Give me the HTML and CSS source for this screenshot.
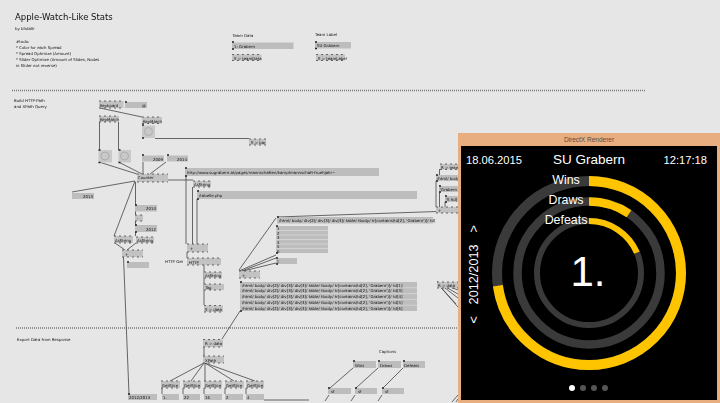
FILE: index.html
```html
<!DOCTYPE html>
<html>
<head>
	<meta charset="utf-8">
	<title>Apple-Watch-Like Stats</title>
	<link rel="stylesheet" href="styles.css">
</head>
<body>
	<!-- the patch is a free canvas, every node sits where it was dropped -->
	<svg class="patch" width="720" height="403" viewBox="0 0 720 403">
		<text class="heading" x="15" y="20">Apple-Watch-Like Stats</text>
		<text class="label" x="15" y="30">by bhdallr</text>
		<text class="label" x="16" y="42.5">#todo:</text>
		<text class="label" x="16" y="49">* Color for each Spread</text>
		<text class="label" x="16" y="54.5">* Spread Optimize (Amount)</text>
		<text class="label" x="16" y="60.5">* Slider Optimize (Amount of Slides, Nodes</text>
		<text class="label" x="16" y="66.5">in Slider not reverse)</text>
		<text class="label" x="232.5" y="37">Team Data</text>
		<text class="label" x="315" y="36">Team Label</text>
		<text class="label" x="14" y="102">Build HTTP-Path</text>
		<text class="label" x="14" y="108">and XPath Query</text>
		<text class="label" x="165" y="263">HTTP Get</text>
		<text class="label" x="17" y="341">Export Data from Response</text>
		<text class="label" x="379" y="352.5">Captions</text>

		<line class="rule" x1="12" y1="90.5" x2="645" y2="90.5"/>
		<line class="rule" x1="16" y1="328" x2="458" y2="328"/>

		<!-- links -->
		<path class="wire" d="M100 108L142 117M99.5 122V150M118.5 122V150M155 138.5H249M99 162L137 174M118.5 162L142 174M143 162V174M166 162L150 174M168 180H193M135 181L72 192M135 181L114 236M135.5 182V236M136 243L127 250M115 243L125 250M123.5 257L129 394M186 176V244M192.5 187V244M197 199V244M187 252V258M204 265V305M239 270L276 218M239 271L276 255M239 272L276 258M239 272L276 263M240 311L222 339M277 217L437 211.5M436 181V207M439.5 169V175M439.5 192V207M445 202V207M437 282L458 290M437 282L458 294M437 282L458 298M437 283L458 307M437 283L456 304M204 347V356M204 363L170 381M204 363L191 381M205 363V381M205 363L234 381M205 363L255 381M162 388V394M183 388V394M204 388V394M225 388V394M246 388V394M264 400H309M353 368L330 388M378 368L356 388M403 368L383 388M329 395L325 401M355 395L351 401M382 395L378 401M452 402L458 395M456 402L458 399"/>

		<!-- io boxes -->
		<rect class="box" x="232" y="42.5" width="61.5" height="6.5"/>
		<text class="value" x="234" y="47.5">1: Grabern</text>
		<rect class="box" x="315" y="42" width="36" height="6.5"/>
		<text class="value" x="317" y="47">SU Grabern</text>
		<rect class="box" x="125" y="102" width="22" height="6"/>
		<text class="value end" x="146" y="107">@</text>
		<rect class="pad" x="142" y="125.5" width="13" height="12.5"/>
		<rect class="pad" x="98.5" y="150" width="13.5" height="12.5"/>
		<rect class="pad" x="118.5" y="150" width="12.5" height="12.5"/>
		<circle class="bang" cx="148.5" cy="131.5" r="4"/>
		<circle class="bang" cx="105" cy="156" r="4"/>
		<circle class="bang" cx="124.5" cy="156" r="4"/>
		<rect class="box" x="142" y="155.5" width="22" height="6"/>
		<text class="value end" x="163" y="160.5">2009</text>
		<rect class="box" x="167" y="155.5" width="21" height="6"/>
		<text class="value end" x="187" y="160.5">2014</text>
		<rect class="box" x="72" y="193" width="22" height="6"/>
		<text class="value end" x="93" y="198">2013</text>
		<rect class="box" x="135" y="205" width="22" height="6.5"/>
		<text class="value end" x="156" y="210">2013</text>
		<rect class="box" x="135" y="225" width="22" height="7"/>
		<text class="value end" x="156" y="230.5">2012</text>
		<rect class="box" x="127" y="262" width="22" height="6"/>
		<rect class="box" x="185" y="168" width="194" height="8"/>
		<text class="value" x="187" y="173.5">http://www.sugrabern.at/pages/mannschaften/kampfmannschaft-fruehjahr~</text>
		<rect class="box" x="197" y="191" width="220" height="8"/>
		<text class="value" x="199" y="196.5">/tabelle.php</text>
		<rect class="box" x="277" y="217" width="156" height="6.5"/>
		<text class="value" x="279" y="222">/html/ body/ div[2]/ div[3]/ div[3]/ table/ tbody/ tr[contains(td[2], 'Grabern')]/ td[</text>
		<rect class="box" x="276" y="226" width="52" height="27"/>
		<path class="rows" d="M276 230.5H328M276 235H328M276 239.5H328M276 244H328M276 248.5H328"/>
		<text class="value" x="277" y="230">1</text>
		<text class="value" x="277" y="234.5">2</text>
		<text class="value" x="277" y="239">3</text>
		<text class="value" x="277" y="243.5">4</text>
		<text class="value" x="277" y="248">5</text>
		<text class="value" x="277" y="252.5">6</text>
		<rect class="box" x="276" y="258" width="21" height="6"/>
		<text class="value" x="277" y="263">]</text>
		<rect class="box" x="240" y="282" width="177" height="29"/>
		<path class="rows" d="M240 287.8H417M240 293.6H417M240 299.4H417M240 305.2H417"/>
		<text class="value" x="242" y="286.5">/html/ body/ div[2]/ div[3]/ div[3]/ table/ tbody/ tr[contains(td[2], 'Grabern')]/ td[1]</text>
		<text class="value" x="242" y="292.3">/html/ body/ div[2]/ div[3]/ div[3]/ table/ tbody/ tr[contains(td[2], 'Grabern')]/ td[3]</text>
		<text class="value" x="242" y="298.1">/html/ body/ div[2]/ div[3]/ div[3]/ table/ tbody/ tr[contains(td[2], 'Grabern')]/ td[4]</text>
		<text class="value" x="242" y="303.9">/html/ body/ div[2]/ div[3]/ div[3]/ table/ tbody/ tr[contains(td[2], 'Grabern')]/ td[5]</text>
		<text class="value" x="242" y="309.7">/html/ body/ div[2]/ div[3]/ div[3]/ table/ tbody/ tr[contains(td[2], 'Grabern')]/ td[6]</text>
		<rect class="box" x="436" y="175" width="22" height="6"/>
		<text class="value" x="437" y="180">/html/ body</text>
		<rect class="box" x="439" y="186" width="19" height="6"/>
		<text class="value" x="440" y="191">'Grabern</text>
		<rect class="box" x="445" y="196" width="13" height="6"/>
		<text class="value" x="446" y="201">'S hd[</text>
		<rect class="box" x="128" y="394" width="29" height="6"/>
		<text class="value" x="129" y="399">2012/2013</text>
		<rect class="box" x="162" y="394" width="17" height="6"/>
		<text class="value" x="163" y="399">1.</text>
		<rect class="box" x="183" y="394" width="17" height="6"/>
		<text class="value" x="184" y="399">22</text>
		<rect class="box" x="204" y="394" width="18" height="6"/>
		<text class="value" x="205" y="399">16</text>
		<rect class="box" x="225" y="394" width="18" height="6"/>
		<text class="value" x="226" y="399">2</text>
		<rect class="box" x="246" y="394" width="18" height="6"/>
		<text class="value" x="247" y="399">4</text>
		<rect class="box" x="353" y="361" width="23" height="7"/>
		<text class="value" x="355" y="366.5">Wins</text>
		<rect class="box" x="378" y="361" width="23" height="7"/>
		<text class="value" x="380" y="366.5">Draws</text>
		<rect class="box" x="403" y="361" width="22" height="7"/>
		<text class="value" x="404" y="366.5">Defeats</text>
		<rect class="box" x="328" y="388" width="23" height="6"/>
		<text class="value" x="331" y="393">sf</text>
		<rect class="box" x="355" y="388" width="22" height="6"/>
		<text class="value" x="358" y="393">sf</text>
		<rect class="box" x="382" y="388" width="22" height="6"/>
		<text class="value" x="385" y="393">sf</text>

		<!-- nodes -->
		<rect class="node" x="232" y="54.5" width="29.5" height="6"/>
		<text class="value" x="234" y="59.5">S &gt; teamData</text>
		<rect class="node" x="316" y="54.5" width="29" height="6"/>
		<text class="value" x="318" y="59.5">S &gt; teamLabel</text>
		<rect class="node" x="99" y="101" width="24.5" height="7"/>
		<text class="value" x="100" y="106.5">Keyboard</text>
		<rect class="node" x="99" y="116" width="20" height="6"/>
		<text class="value" x="100" y="121">KeyMatch</text>
		<rect class="node" x="142" y="117" width="20" height="6.5"/>
		<text class="value" x="143" y="122.5">KeyMatch</text>
		<rect class="node" x="249" y="139" width="17" height="6"/>
		<text class="value" x="251" y="144">S &gt; bar</text>
		<rect class="node" x="137" y="174" width="31" height="8"/>
		<text class="value" x="138" y="179">Counter</text>
		<rect class="node" x="135" y="215" width="8" height="6"/>
		<text class="value" x="137" y="220">-</text>
		<rect class="node" x="114" y="236" width="19" height="7"/>
		<text class="value" x="115" y="241.5">AsString</text>
		<rect class="node" x="136" y="237" width="18" height="6"/>
		<text class="value" x="137" y="242">AsString</text>
		<rect class="node" x="122" y="250" width="21" height="7"/>
		<text class="value" x="125" y="255.5">+</text>
		<rect class="node" x="193" y="181" width="18" height="6"/>
		<text class="value" x="194" y="186">AsString</text>
		<rect class="node" x="187" y="244" width="21" height="8"/>
		<text class="value" x="190" y="249.5">+</text>
		<rect class="node" x="187" y="258" width="34" height="7"/>
		<text class="value" x="189" y="263.5">HTTP</text>
		<rect class="node" x="204" y="272" width="18" height="6"/>
		<text class="value" x="205" y="277">AsString</text>
		<rect class="node" x="204" y="284" width="20" height="6"/>
		<text class="value" x="205" y="289">Tag</text>
		<rect class="node" x="204" y="305.5" width="19" height="6.5"/>
		<text class="value" x="205" y="310.5">S &gt; data</text>
		<rect class="node" x="239" y="271" width="21" height="7"/>
		<text class="value" x="242" y="276.5">+</text>
		<rect class="node" x="440" y="164" width="18" height="5.5"/>
		<text class="value" x="441" y="168.5">R &gt; teamData</text>
		<rect class="node" x="436" y="207" width="22" height="6"/>
		<text class="value" x="438" y="212">+</text>
		<rect class="node" x="437" y="282" width="21" height="6"/>
		<text class="value" x="438" y="287">R &gt; data</text>
		<rect class="node" x="203" y="339.5" width="20" height="7.5"/>
		<text class="value" x="205" y="345">R &gt; data</text>
		<rect class="node" x="203" y="356" width="21" height="7"/>
		<text class="value" x="205" y="361.5">XPath</text>
		<rect class="node" x="161" y="381" width="19" height="7"/>
		<text class="value" x="162" y="386.5">GetSlice</text>
		<rect class="node" x="183" y="381" width="18" height="7"/>
		<text class="value" x="184" y="386.5">GetSlice</text>
		<rect class="node" x="204" y="381" width="18" height="7"/>
		<text class="value" x="205" y="386.5">GetSlice</text>
		<rect class="node" x="225" y="381" width="19" height="7"/>
		<text class="value" x="226" y="386.5">GetSlice</text>
		<rect class="node" x="246" y="381" width="18" height="7"/>
		<text class="value" x="247" y="386.5">GetSlice</text>

		<path class="pins" d="M232 54.5h29.5M232 60.5h29.5M316 54.5h29M316 60.5h29M99 101h24.5M99 108h24.5M99 116h20M99 122h20M142 117h20M142 123.5h20M249 139h17M249 145h17M137 174h31M137 182h31M135 215h8M135 221h8M114 236h19M114 243h19M136 237h18M136 243h18M122 250h21M122 257h21M193 181h18M193 187h18M187 244h21M187 252h21M187 258h34M187 265h34M204 272h18M204 278h18M204 284h20M204 290h20M204 305.5h19M204 312h19M239 271h21M239 278h21M440 164h18M440 169.5h18M436 207h22M436 213h22M437 282h21M437 288h21M203 339.5h20M203 347h20M203 356h21M203 363h21M161 381h19M161 388h19M183 381h18M183 388h18M204 381h18M204 388h18M225 381h19M225 388h19M246 381h18M246 388h18"/>
		<path class="corners" d="M232 42h2M232 49h2M315 42h2M315 48.5h2M125 102h2M142 125h2M142 138h2M98.5 150h2M98.5 162.5h2M118.5 150h2M118.5 162.5h2M142 155h2M167 155h2M185 168h2M185 176h2M197 191h2M197 199h2M277 217h2M276 226h2M276 253h2M276 258h2M276 264h2M240 282h2M240 311h2M135 205h2M135 225h2M135 232h2M127 262h2M436 175h2M436 181h2M439 186h2M439 192h2M445 196h2M445 202h2M128 394h2M353 361h2M378 361h2M403 361h2M328 388h2M355 388h2M382 388h2"/>
	</svg>

	<div class="renderer">
		<div class="renderer-title">DirectX Renderer</div>
		<div class="screen">
			<div class="topbar">
				<span class="date">18.06.2015</span>
				<span class="team">SU Grabern</span>
				<span class="clock">12:17:18</span>
			</div>
			<div class="dial">
				<div class="season">
					<span>&lt;</span>
					<span>2012/2013</span>
					<span>&gt;</span>
				</div>
				<svg class="rings" width="194" height="194" viewBox="0 0 194 194">
					<circle class="track outer" cx="97" cy="97" r="92"/>
					<circle class="track middle" cx="97" cy="97" r="71.5"/>
					<circle class="track inner" cx="97" cy="97" r="52"/>
					<circle class="arc outer" cx="97" cy="97" r="92" pathLength="360" stroke-dasharray="262 360"/>
					<circle class="arc middle" cx="97" cy="97" r="71.5" pathLength="360" stroke-dasharray="34 360"/>
					<circle class="arc inner" cx="97" cy="97" r="52" pathLength="360" stroke-dasharray="67 360"/>
				</svg>
				<div class="captions">
					<span>Wins</span>
					<span>Draws</span>
					<span>Defeats</span>
				</div>
				<div class="rank">1.</div>
			</div>
			<div class="pager">
				<span class="dot active"></span>
				<span class="dot"></span>
				<span class="dot"></span>
				<span class="dot"></span>
			</div>
		</div>
	</div>
</body>
</html>
```

FILE: styles.css
```css
html, body {
	margin: 0;
	height: 100%;
}
body {
	background-color: #e6e6e6;
	position: relative;
	overflow: hidden;
	font-family: 'Liberation Sans', Arial, sans-serif;
}
.patch {
	display: block;
	filter: blur(0.25px);
}
.patch text {
	fill: #111111;
	font-family: 'DejaVu Sans', sans-serif;
}
.patch .heading {
	font-size: 8.5px;
}
.label {
	font-size: 3.9px;
}
.value {
	font-size: 3.9px;
}
.value.end {
	text-anchor: end;
}
.rule {
	stroke: #777777;
	stroke-width: 1.5;
	stroke-dasharray: 1 1;
}
.box {
	fill: #bdbdbd;
}
.node {
	fill: #c2c2c2;
}
.pad {
	fill: #c9c9c9;
}
.rows {
	fill: none;
	stroke: #e0e0e0;
	stroke-width: 0.6;
}
.bang {
	fill: none;
	stroke: #adadad;
	stroke-width: 1;
}
.wire {
	fill: none;
	stroke: #444444;
	stroke-width: 0.8;
}
.pins {
	fill: none;
	stroke: #4a4a4a;
	stroke-width: 0.8;
	stroke-dasharray: 2 3;
}
.corners {
	fill: none;
	stroke: #222222;
	stroke-width: 1.5;
}

/* renderer window lies over the patch */
.renderer {
	position: absolute;
	left: 458px;
	top: 133px;
	width: 262px;
	height: 270px;
	box-sizing: border-box;
	background-color: #e8ae80;
	padding: 0 3px 3px 3px;
	display: flex;
	flex-direction: column;
}
.renderer-title {
	height: 13px;
	line-height: 13px;
	text-align: center;
	font-size: 6.5px;
	color: #5a4a3e;
}
.screen {
	flex: 1;
	background-color: #000000;
	color: #ffffff;
	display: flex;
	flex-direction: column;
}
.topbar {
	display: grid;
	grid-template-columns: 1fr auto 1fr;
	align-items: center;
	height: 26px;
	padding: 1px 10px 0 5px;
	box-sizing: border-box;
}
.date, .clock {
	font-size: 11.2px;
}
.clock {
	justify-self: end;
}
.team {
	font-size: 13.5px;
	margin-left: 5px;
}
.dial {
	flex: 1;
	position: relative;
	display: flex;
	justify-content: center;
	padding-top: 4px;
}
.rings {
	margin-right: 1px;
}
.rings circle {
	fill: none;
	transform: rotate(-90deg);
	transform-origin: 97px 97px;
}
.track {
	stroke: #3a3a3a;
}
.arc {
	stroke: #ffc400;
}
.outer {
	stroke-width: 10;
}
.middle {
	stroke-width: 8.5;
}
.inner {
	stroke-width: 6;
}
.season {
	position: absolute;
	left: 6px;
	top: 50%;
	transform: translateY(-50%) rotate(180deg);
	writing-mode: vertical-rl;
	display: flex;
	gap: 12px;
	font-size: 12.7px;
	line-height: 14px;
}
.captions {
	position: absolute;
	left: 75px;
	top: -2px;
	width: 60px;
	display: flex;
	flex-direction: column;
	align-items: center;
	font-size: 12.4px;
	line-height: 20px;
}
.rank {
	position: absolute;
	left: 0;
	right: 2px;
	top: 75px;
	text-align: center;
	font-size: 42px;
	line-height: 50px;
}
.pager {
	display: flex;
	justify-content: center;
	align-items: center;
	gap: 5px;
	height: 24px;
	padding-right: 1px;
}
.dot {
	width: 6px;
	height: 6px;
	border-radius: 50%;
	background-color: #555555;
}
.dot.active {
	background-color: #ffffff;
}
```
